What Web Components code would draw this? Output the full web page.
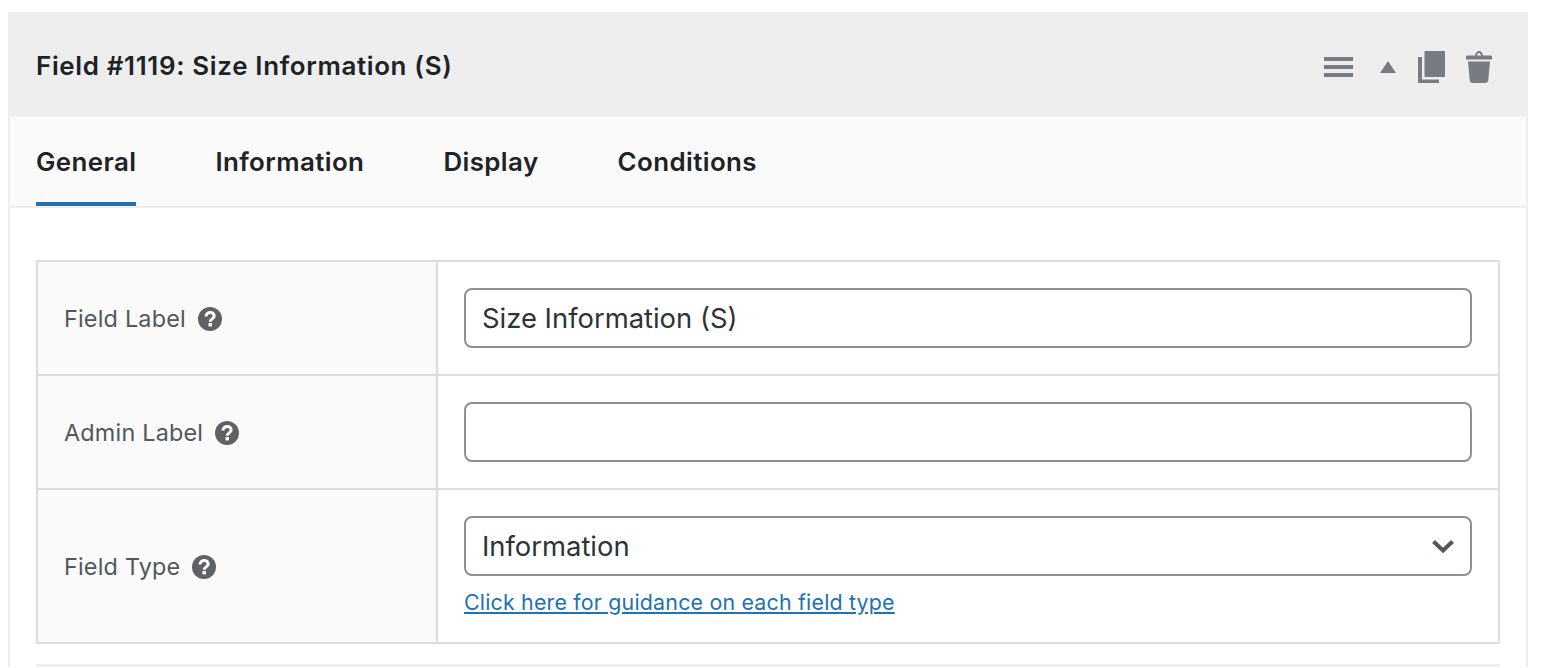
<!DOCTYPE html>
<html lang="en"><head><meta charset="utf-8"><title>Field</title>
<style>
html,body{margin:0;padding:0;background:#fff;height:668px;overflow:hidden}
body{font-family:Inter,"Liberation Sans",sans-serif;color:#1d2327}
</style></head><body>
<field-panel>
  <span slot="title">Field #1119: Size Information (S)</span>
  <tab-bar slot="tabs">
    <tab-item active>General</tab-item><tab-item>Information</tab-item><tab-item>Display</tab-item><tab-item>Conditions</tab-item>
  </tab-bar>
  <field-table>
    <field-row label="Field Label"><text-box>Size Information (S)</text-box></field-row>
    <field-row label="Admin Label"><text-box></text-box></field-row>
    <field-row label="Field Type" tall><text-box select>Information</text-box><a class="guide" href="#" style="display:block;margin-top:11px;font-size:21.4px;letter-spacing:.19px;line-height:30px;color:#2271b1">Click here for guidance on each field type</a></field-row>
  </field-table>
</field-panel>
<script>
function def(name, html, init){
  customElements.define(name, class extends HTMLElement{
    constructor(){super();this.attachShadow({mode:'open'}).innerHTML=html;}
    connectedCallback(){init&&init(this);}
  });
}
def('field-panel',`<style>
:host{display:block;padding:12px 18px 0 8px;box-sizing:border-box}
.h{height:105px;background:#eee;display:flex;align-items:center;padding:0 36px 0 28px;box-sizing:border-box}
.t{flex:1;font-size:25.9px;font-weight:600;letter-spacing:.67px;color:#1d2327;line-height:34px;margin-top:2px}
.ic{display:flex;padding-top:5px}
svg{display:block;fill:#787c82}
.b{border-left:2px solid #eee;border-right:2px solid #eee;}
.c{padding:52px 26px 0 26px}
.end{height:3px;background:#eee;margin-top:20px}
</style>
<div class="h"><div class="t"><slot name="title"></slot></div><div class="ic">
<svg width="29" height="32" viewBox="0 0 29 32"><rect y="6" width="29" height="4"/><rect y="14" width="29" height="4"/><rect y="22" width="29" height="4"/></svg>
<svg style="margin-left:27px" width="16" height="32" viewBox="0 0 16 32"><path d="M8 10L16 22H0z"/></svg>
<svg style="margin-left:22px" width="27" height="32" viewBox="0 0 27 32"><path d="M6.500 0H27v26H6.500z"/><path d="M0 6h4v22.500h17V32H0z"/></svg>
<svg style="margin-left:21px" width="26" height="32" viewBox="0 0 26 32"><path d="M9 4.500C9.500 1.500 11 0 13 0s3.500 1.500 4 4.500h7.500c1 0 1.500.5 1.500 1.500v2.500H0V6c0-1 .5-1.500 1.500-1.500zM11 4.500h4C14.700 3 14 2 13 2s-1.700 1-2 2.500z"/><path d="M2 10.500h22L22.300 29c-.2 2-1.300 3-3 3H6.700c-1.700 0-2.800-1-3-3z"/></svg>
</div></div>
<div class="b"><slot name="tabs"></slot><div class="c"><slot></slot><div class="end"></div></div></div>`);
def('tab-bar',`<style>:host{display:flex;gap:79px;height:91px;box-sizing:border-box;padding-left:26px;background:#fafafa;border-bottom:2px solid #eee}</style><slot></slot>`);
def('tab-item',`<style>:host{display:block;font-size:25.9px;font-weight:600;letter-spacing:.41px;color:#1d2327;line-height:34px;padding-top:28px;height:89px;box-sizing:border-box}
:host([active]){border-bottom:4px solid #2271b1;height:89px}</style><slot></slot>`);
def('field-table',`<style>:host{display:block;border:2px solid #dcdcde;border-bottom:0;width:1464px;box-sizing:border-box}</style><slot></slot>`);
def('field-row',`<style>
:host{display:grid;grid-template-columns:400px 1fr;border-bottom:2px solid #dcdcde;height:114px;box-sizing:border-box}
:host([tall]){height:154px}
.l{background:#fafafa;border-right:2px solid #dcdcde;display:flex;align-items:center;gap:12px;padding:0 0 0 26px;font-size:23.4px;letter-spacing:.2px;color:#50575e}
.v{padding:26px 26px 0 26px}
svg{display:block;flex:none;margin-top:1px}
</style><div class="l"><span id="t"></span>
<svg width="24" height="24" viewBox="0 0 24 24"><circle cx="12" cy="12" r="12" fill="#5f6164"/><path d="M8 9.500c0-2.500 2-4 4.200-4 2.300 0 4 1.400 4 3.500 0 2.800-4 3-4 5.700" fill="none" stroke="#fff" stroke-width="3"/><rect x="10.500" y="16" width="3.400" height="3.400" fill="#fff"/></svg>
</div><div class="v"><slot></slot></div>`,el=>{el.shadowRoot.getElementById('t').textContent=el.getAttribute('label');});
def('text-box',`<style>
:host{display:flex;align-items:center;height:60px;box-sizing:border-box;border:2px solid #8c8f94;border-radius:8px;background:#fff;padding:0 16px;font-size:27.4px;color:#2c3338}
.s{flex:1}
svg{display:none}
:host([select]) svg{display:block}
</style><div class="s"><slot></slot></div>
<svg width="22" height="14" viewBox="0 0 22 14"><path d="M1.500 2.500L11 11.500 20.500 2.500" fill="none" stroke="#50575e" stroke-width="4"/></svg>`);
</script>
</body></html>
